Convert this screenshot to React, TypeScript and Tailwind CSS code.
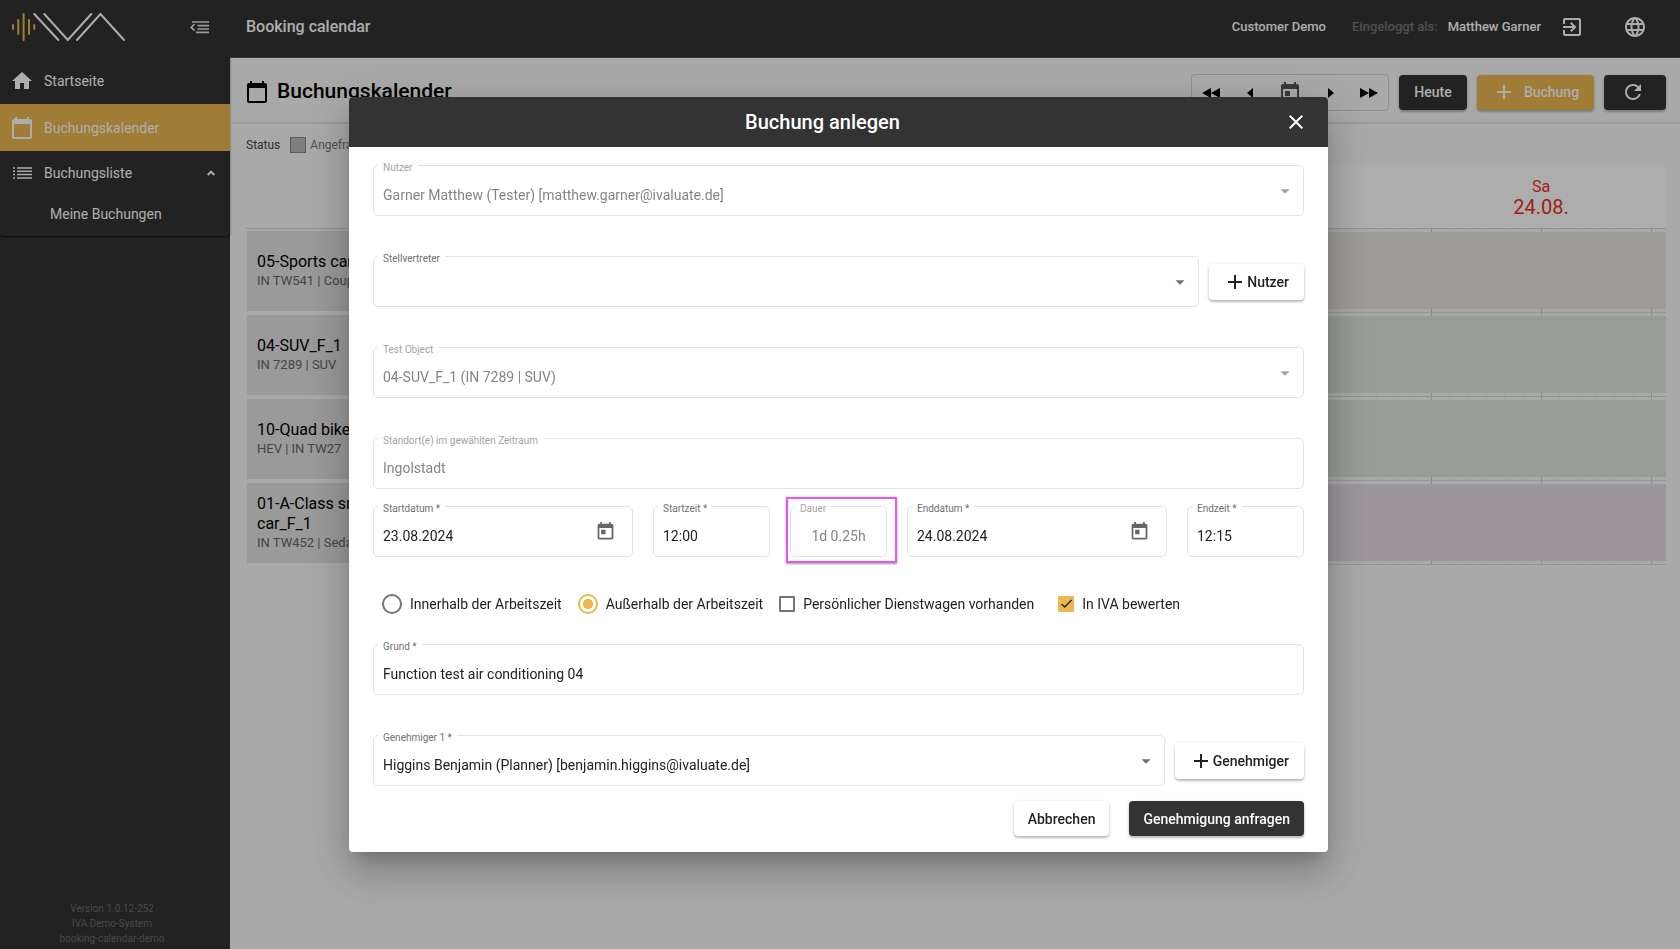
import React from "react";
import {
  MdAdd,
  MdArrowDropDown,
  MdCalendarToday,
  MdCheck,
  MdClose,
  MdExitToApp,
  MdHome,
  MdLanguage,
  MdRefresh,
  MdToday,
} from "react-icons/md";

const testObjects = [
  { name: "05-Sports car_F_1", info: "IN TW541 | Coupé", color: "bg-[#e8e6de]" },
  { name: "04-SUV_F_1", info: "IN 7289 | SUV", color: "bg-[#e0e7df]" },
  { name: "10-Quad bike_F_1", info: "HEV | IN TW27", color: "bg-[#e0e7df]" },
  { name: "01-A-Class small car_F_1", info: "IN TW452 | Sedan", color: "bg-[#e7dfe7]" },
];

const halfDays = [...Array(9)];
const slots = [...Array(6)];

const Logo: React.FC = () => (
  <svg width="116" height="30" viewBox="0 0 116 30" fill="none" strokeWidth="2" strokeLinecap="round">
    <path stroke="#ebb850" d="M2 13v4M7.3 8v14M12.6 2v26M18 8v14M23.3 13v4" />
    <path stroke="#fff" d="M23.3 2l24 26M33.3 2l23.5 26L80.3 2M66 28L89.5 2L113 28" />
  </svg>
);

const Sidebar: React.FC = () => (
  <aside className="w-[230px] shrink-0 bg-[#333] text-white flex flex-col">
    <div className="h-[57px] flex items-start justify-between pl-[11px] pr-[21px] pt-3">
      <Logo />
      <button aria-label="Menü einklappen" className="pt-2">
        <svg width="19" height="14" viewBox="0 0 19 14" fill="none" stroke="#e6e6e6" strokeWidth="1.7">
          <path d="M2 2h17M7.5 5.6h11.5M7.5 9h11.5M6 12.4h13" />
          <path d="M4.6 4L1.2 7.4l3.4 3.2" />
        </svg>
      </button>
    </div>
    <nav className="text-sm shadow-[0_1px_2px_rgba(0,0,0,0.6)] rounded-b pb-0.5">
      <a href="#start" className="h-[47px] flex items-center gap-[10px] pl-[10px]">
        <MdHome size={24} />
        Startseite
      </a>
      <a href="#kalender" className="h-[47px] flex items-center gap-[10px] pl-[10px] bg-[#ebb850]">
        <MdCalendarToday size={24} />
        Buchungskalender
      </a>
      <a href="#liste" className="h-[43px] flex items-center gap-3 pl-[13px] pr-[15px]">
        <svg width="19" height="12" viewBox="0 0 19 12" stroke="#fff" strokeWidth="1.5">
          <path d="M0 1h2M4 1h15M0 4.3h2M4 4.3h15M0 7.6h2M4 7.6h15M0 10.9h2M4 10.9h15" />
        </svg>
        <span className="grow">Buchungsliste</span>
        <svg width="8" height="6" viewBox="0 0 8 6" fill="none" stroke="#fff" strokeWidth="2">
          <path d="M0.7 5L4 1.6L7.3 5" />
        </svg>
      </a>
      <a href="#meine" className="h-10 flex items-center pl-[50px]">
        Meine Buchungen
      </a>
    </nav>
    <footer className="mt-auto mr-1.5 pb-[3px] text-center text-[10px] leading-[15px] text-[#6b6b6b]">
      <p>Version 1.0.12-252</p>
      <p>IVA Demo-System</p>
      <p>booking-calendar-demo</p>
    </footer>
  </aside>
);

const TopBar: React.FC = () => (
  <header className="h-[58px] shrink-0 bg-[#333] border-b border-[#555] text-white flex items-center pl-4 pr-[33px] pb-1 font-medium text-[13px]">
    <span className="text-base grow">Booking calendar</span>
    <span>Customer Demo</span>
    <span className="ml-[26px] text-[#777]">Eingeloggt als:</span>
    <span className="ml-[10px]">Matthew Garner</span>
    <button aria-label="Abmelden" className="ml-[19px]">
      <MdExitToApp size={24} />
    </button>
    <button aria-label="Sprache" className="ml-[39px]">
      <MdLanguage size={24} />
    </button>
  </header>
);

const raised = "shadow-[0_2px_2px_rgba(0,0,0,0.2),0_1px_4px_rgba(0,0,0,0.14)]";

const Toolbar: React.FC = () => (
  <div className="h-[66px] shrink-0 flex items-center pl-[15px] pr-[14px] pt-1 border-b-2 border-[#e2e2e2]">
    <MdCalendarToday size={24} className="text-black" />
    <h1 className="ml-2 grow text-[21px] font-medium text-black">Buchungskalender</h1>
    <div className="h-[37px] w-[198px] rounded border border-[#d4d4d4] flex items-center justify-between px-[9px] pt-0.5 text-black">
      <button aria-label="Woche zurück">
        <svg width="20" height="12" viewBox="0 0 20 12" fill="currentColor">
          <path d="M10 1v10L1 6zM19 1v10l-9-5z" />
        </svg>
      </button>
      <button aria-label="Tag zurück">
        <svg width="8" height="12" viewBox="0 0 8 12" fill="currentColor">
          <path d="M7 1v10L1 6z" />
        </svg>
      </button>
      <button aria-label="Datum wählen" className="text-[#555]">
        <MdToday size={24} />
      </button>
      <button aria-label="Tag vor">
        <svg width="8" height="12" viewBox="0 0 8 12" fill="currentColor">
          <path d="M1 1v10l6-5z" />
        </svg>
      </button>
      <button aria-label="Woche vor">
        <svg width="20" height="12" viewBox="0 0 20 12" fill="currentColor">
          <path d="M1 1v10l9-5zM10 1v10l9-5z" />
        </svg>
      </button>
    </div>
    <div className="ml-[10px] flex gap-[10px] text-sm font-medium text-white">
      <button className={`h-[35px] w-[68px] rounded bg-[#333] ${raised}`}>Heute</button>
      <button className={`h-[35px] w-[117px] rounded bg-[#ebb850] flex items-center justify-center gap-2 ${raised}`}>
        <MdAdd size={24} />
        Buchung
      </button>
      <button aria-label="Aktualisieren" className={`h-[35px] w-[62px] rounded bg-[#333] flex items-center justify-center pr-1 ${raised}`}>
        <MdRefresh size={24} />
      </button>
    </div>
  </div>
);

const Calendar: React.FC = () => (
  <div className="pl-4 pr-[14px]">
    <div className="h-[41px] flex items-center text-xs text-[#444]">
      Status
      <span className="ml-[10px] mr-1 size-4 border border-[#888] bg-[#bbb]" />
      <span className="text-[#777]">Angefragt</span>
    </div>
    <table className="w-full table-fixed border-separate border-spacing-0">
      <thead>
        <tr className="h-16">
          <th className="w-[200px] border-b border-[#d8d8d8]" aria-label="Testobjekt" />
          <th className="border-b border-[#d8d8d8] bg-white font-normal text-[#ee3024]">
            <div className="ml-auto mr-[15px] w-[220px] leading-5">
              <div className="text-base leading-5">Sa</div>
              <div className="text-xl leading-5">24.08.</div>
            </div>
          </th>
        </tr>
      </thead>
      <tbody>
        {testObjects.map((obj) => (
          <tr key={obj.name} className="h-[84px]">
            <th className="py-0.5 pl-px pr-0 text-left font-normal">
              <div className="h-20 bg-[#e3e3e3] flex flex-col justify-center pl-[10px] pr-[30px] text-base leading-5 text-black">
                {obj.name}
                <span className="text-[13px] leading-[18px] text-[#666]">{obj.info}</span>
              </div>
            </th>
            <td className="p-0">
              <div className="grid h-[84px] overflow-hidden border-b border-[#dcdcdc]">
                <div className="[grid-area:1/1] flex justify-end pr-[14px]">
                  {halfDays.map((_, i) => (
                    <div key={i} className="w-[110px] shrink-0 flex border-r border-[#d0d0d0]">
                      {slots.map((_, s) => (
                        <div key={s} className="grow border-r border-[#f2f2f2] last:border-r-0"></div>
                      ))}
                    </div>
                  ))}
                </div>
                <div className={`[grid-area:1/1] my-[3px] ${obj.color}`}></div>
              </div>
            </td>
          </tr>
        ))}
      </tbody>
    </table>
  </div>
);

interface FieldProps {
  id: string;
  label: string;
  value?: string;
  disabled?: boolean;
  select?: boolean;
  date?: boolean;
  center?: boolean;
}

const Field: React.FC<FieldProps> = ({ id, label, value = "", disabled, select, date, center }) => (
  <div className="relative h-[51px] min-w-0 grow rounded-[5px] border border-[#e2e2e2] flex items-center">
    <label
      htmlFor={id}
      className={`absolute left-1 -top-1 px-[5px] bg-white text-[10px] leading-3 ${disabled ? "text-[#a3a3a3]" : "text-[#707070]"}`}
    >
      {label}
    </label>
    {select ? (
      <>
        <select
          id={id}
          disabled={disabled}
          defaultValue={value}
          className="size-full appearance-none bg-transparent pl-[9px] pt-2 text-sm text-[#222] opacity-100 disabled:text-[#858585]"
        >
          <option>{value}</option>
        </select>
        <MdArrowDropDown
          size={22}
          className={`absolute right-[7px] pointer-events-none ${disabled ? "text-[#a3a3a3]" : "text-[#707070]"}`}
        />
      </>
    ) : (
      <input
        id={id}
        type="text"
        disabled={disabled}
        defaultValue={value}
        className={`size-full bg-transparent px-[9px] pt-2 text-sm text-[#222] disabled:text-[#858585] ${center ? "text-center" : ""}`}
      />
    )}
    {date && (
      <button type="button" aria-label={`${label} wählen`} className="mr-4 text-[#666]">
        <MdToday size={21} />
      </button>
    )}
  </div>
);

const AddButton: React.FC<{ text: string }> = ({ text }) => (
  <button
    type="button"
    className={`h-9 shrink-0 rounded bg-white pl-[14px] pr-[15px] flex items-center text-sm font-medium text-[#222] ${raised}`}
  >
    <MdAdd size={24} />
    {text}
  </button>
);

const Radio: React.FC<{ label: string; checked?: boolean }> = ({ label, checked }) => (
  <label className="flex items-center gap-2">
    <input
      type="radio"
      name="arbeitszeit"
      defaultChecked={checked}
      className="size-5 appearance-none rounded-full border-2 border-[#757575] checked:border-[#ebb850] checked:bg-[radial-gradient(#ebb850_5px,transparent_5px)]"
    />
    {label}
  </label>
);

const Checkbox: React.FC<{ label: string; checked?: boolean }> = ({ label, checked }) => (
  <label className="flex items-center gap-2">
    <span className="grid place-items-center">
      <input
        type="checkbox"
        defaultChecked={checked}
        className="[grid-area:1/1] size-4 appearance-none rounded-[1px] border-2 border-[#757575] checked:border-[#ebb850] checked:bg-[#ebb850]"
      />
      {checked && <MdCheck size={15} className="[grid-area:1/1] pointer-events-none text-[#222]" />}
    </span>
    {label}
  </label>
);

const BookingDialog: React.FC = () => (
  <div className="fixed inset-0 bg-black/32 flex items-center justify-center pr-[3px]">
    <div
      role="dialog"
      aria-labelledby="dialog-title"
      className="w-[979px] max-w-full rounded bg-white overflow-hidden shadow-[0_11px_15px_-7px_rgba(0,0,0,0.2),0_24px_38px_3px_rgba(0,0,0,0.14),0_9px_46px_8px_rgba(0,0,0,0.12)]"
    >
      <div className="h-[50px] bg-[#333] text-white flex items-center pl-3 pr-5">
        <h2 id="dialog-title" className="grow text-center text-xl font-medium">
          Buchung anlegen
        </h2>
        <button aria-label="Schließen">
          <MdClose size={24} />
        </button>
      </div>

      <form className="px-6 pt-[18px]">
        <div className="flex flex-col gap-10">
          <Field id="nutzer" label="Nutzer" value="Garner Matthew (Tester) [matthew.garner@ivaluate.de]" select disabled />
          <div className="flex items-center gap-[10px]">
            <Field id="stellvertreter" label="Stellvertreter" select />
            <AddButton text="Nutzer" />
          </div>
          <Field id="objekt" label="Test Object" value="04-SUV_F_1 (IN 7289 | SUV)" select disabled />
          <Field id="standort" label="Standort(e) im gewählten Zeitraum" value="Ingolstadt" disabled />
        </div>

        <div className="mt-[17px] grid grid-cols-[260fr_117fr_97fr_260fr_117fr] gap-5">
          <Field id="startdatum" label="Startdatum *" value="23.08.2024" date />
          <Field id="startzeit" label="Startzeit *" value="12:00" />
          <div className="relative">
            <Field id="dauer" label="Dauer" value="1d 0.25h" disabled center />
            <div className="absolute -left-1 -right-[10px] -top-[9px] -bottom-1.5 pointer-events-none border-2 border-[#e954f2] shadow-[0_1px_2px_rgba(0,0,0,0.4)]"></div>
          </div>
          <Field id="enddatum" label="Enddatum *" value="24.08.2024" date />
          <Field id="endzeit" label="Endzeit *" value="12:15" />
        </div>

        <div className="h-[87px] pt-1.5 pl-[9px] flex items-center gap-4 text-sm text-[#222]">
          <Radio label="Innerhalb der Arbeitszeit" />
          <Radio label="Außerhalb der Arbeitszeit" checked />
          <Checkbox label="Persönlicher Dienstwagen vorhanden" />
          <span className="ml-2">
            <Checkbox label="In IVA bewerten" checked />
          </span>
        </div>

        <div className="flex flex-col gap-10">
          <Field id="grund" label="Grund *" value="Function test air conditioning 04" />
          <div className="flex items-center gap-[10px]">
            <Field
              id="genehmiger"
              label="Genehmiger 1 *"
              value="Higgins Benjamin (Planner) [benjamin.higgins@ivaluate.de]"
              select
            />
            <AddButton text="Genehmiger" />
          </div>
        </div>
      </form>

      <div className="flex justify-end gap-5 px-6 pt-[15px] pb-4 text-sm font-medium">
        <button className={`h-[35px] rounded bg-white px-[14px] text-[#222] ${raised}`}>Abbrechen</button>
        <button className={`h-[35px] rounded bg-[#333] px-[14px] text-white ${raised}`}>Genehmigung anfragen</button>
      </div>
    </div>
  </div>
);

const App: React.FC = () => (
  <div className="min-h-screen flex bg-[#fafafa] font-['Roboto',sans-serif]">
    <Sidebar />
    <main className="grow min-w-0 flex flex-col">
      <TopBar />
      <Toolbar />
      <Calendar />
    </main>
    <BookingDialog />
  </div>
);

export default App;
